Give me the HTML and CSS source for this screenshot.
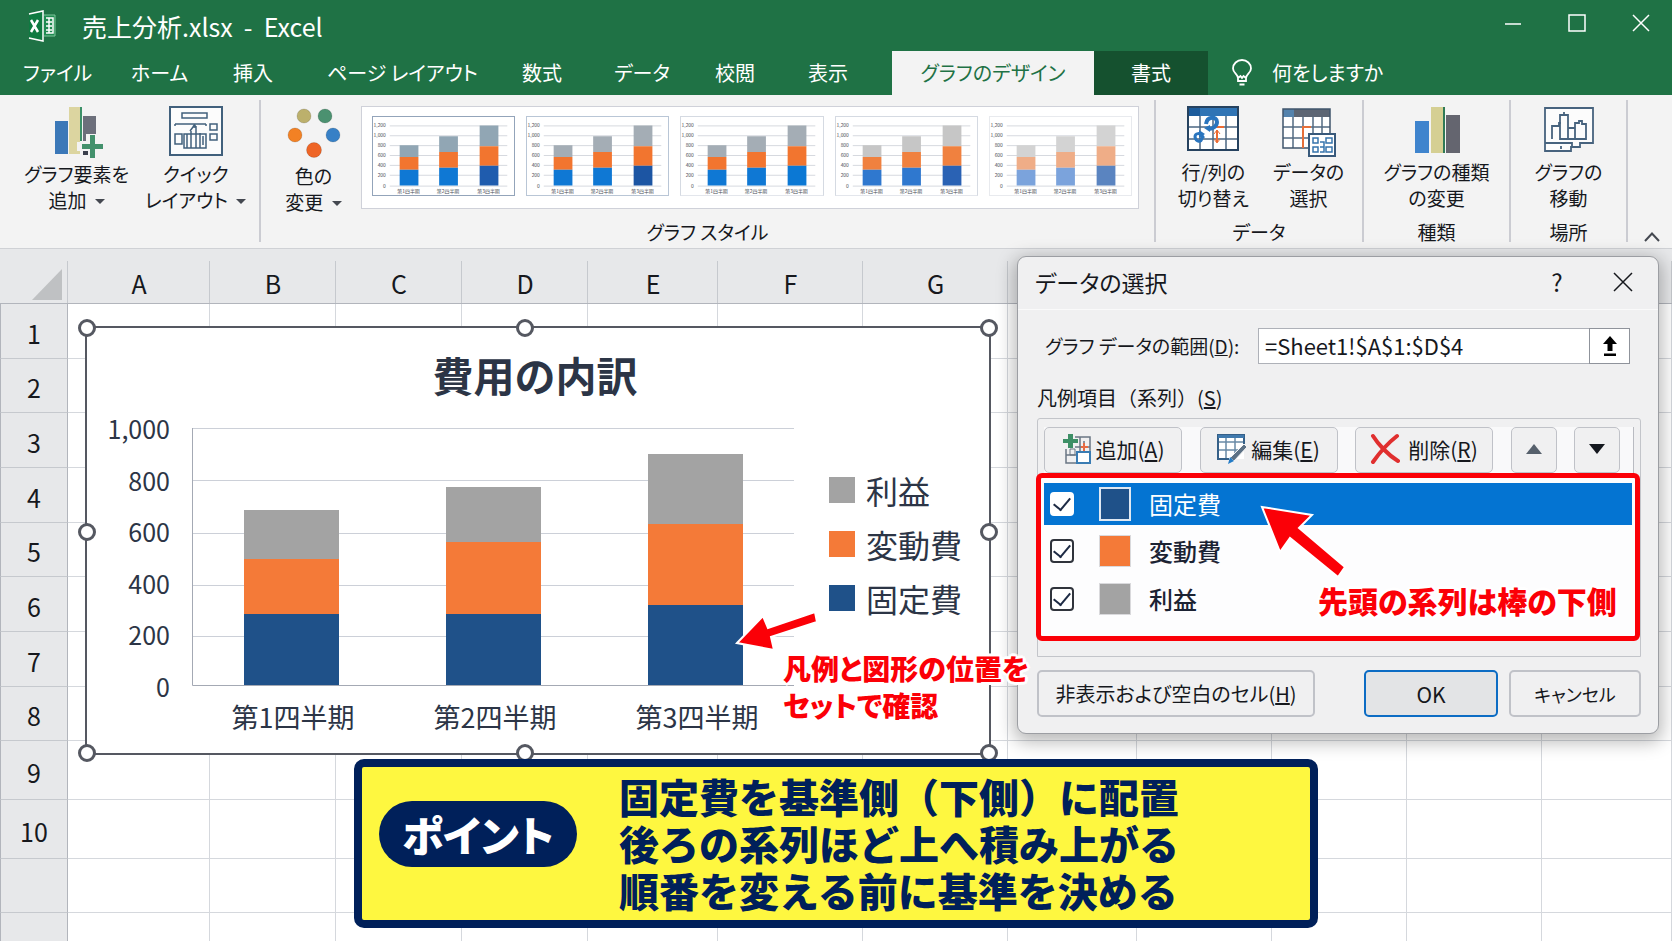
FILE: index.html
```html
<!DOCTYPE html>
<html lang="ja">
<head>
<meta charset="utf-8">
<meta name="viewport" content="width=device-width, initial-scale=1">
<title>売上分析.xlsx - Excel</title>
<link rel="stylesheet" href="styles.css">
</head>
<body>
<svg class="defs" width="0" height="0" aria-hidden="true">
  <symbol id="thumb" viewBox="0 0 143 78">
    <path class="t-grid" d="M17 8.500H136M17 18.500H136M17 28.500H136M17 38.500H136M17 48.500H136M17 58.500H136M17 69.500H136"/>
    <path class="t-top" d="M27 28h19v12H27zM67 19h19v16H67zM108 8h19v21h-19z"/>
    <path class="t-mid" d="M27 40h19v13H27zM67 35h19v16H67zM108 29h19v20h-19z"/>
    <path class="t-low" d="M27 53h19v16H27zM67 51h19v18H67z"/>
    <path class="t-end" d="M108 49h19v20h-19z"/>
    <g class="t-tick">
      <text x="13" y="10">1,200</text><text x="13" y="20">1,000</text><text x="13" y="30">800</text><text x="13" y="40">600</text><text x="13" y="50">400</text><text x="13" y="60">200</text><text x="13" y="71">0</text>
    </g>
    <g class="t-cat"><text x="36" y="76">第1四半期</text><text x="76" y="76">第2四半期</text><text x="117" y="76">第3四半期</text></g>
  </symbol>
</svg>

<div class="app">
  <header class="top">
    <div class="titlebar">
      <svg class="logo" viewBox="0 0 30 32" aria-hidden="true">
        <path d="M16 5h11v21H16" fill="#1f8a51" stroke="#7fc79c" stroke-width="1"/>
        <path d="M18 8h7v15h-7M18 12h6M18 16h6M18 20h6M21 8v15" fill="none" stroke="#fff" stroke-width="1.500"/>
        <path d="M1 4L15 1v30L1 28z" fill="#0f7a41"/>
        <path d="M1 4L15 1v30L1 28" fill="none" stroke="#fff" stroke-width="1.500"/>
        <path d="M3 10l7 12M10 10L3 22" stroke="#fff" stroke-width="2.500"/>
      </svg>
      <h1 class="doc-title">売上分析.xlsx&nbsp; -&nbsp; Excel</h1>
      <div class="win-controls">
        <button type="button" aria-label="最小化"><svg viewBox="0 0 20 20"><path d="M2 11H18"/></svg></button>
        <button type="button" aria-label="最大化"><svg viewBox="0 0 20 20"><path d="M2 2H18V18H2Z"/></svg></button>
        <button type="button" aria-label="閉じる"><svg viewBox="0 0 20 20"><path d="M2 2L18 18M18 2L2 18"/></svg></button>
      </div>
    </div>
    <nav class="tabs">
      <a href="#file">ファイル</a>
      <a href="#home">ホーム</a>
      <a href="#insert">挿入</a>
      <a href="#layout">ページ レイアウト</a>
      <a href="#formula">数式</a>
      <a href="#data">データ</a>
      <a href="#review">校閲</a>
      <a href="#view">表示</a>
      <a class="active" href="#design">グラフのデザイン</a>
      <a class="format" href="#format">書式</a>
      <a class="tell" href="#tell"><svg viewBox="0 0 20 27" aria-hidden="true"><path d="M6 19C6 15 1 14 1 9.500a9 8.500 0 0 1 18 0C19 14 14 15 14 19V22H6ZM6 19l2.500-2 1.500 2 1.500-2L14 19M7.500 25.500h5"/></svg>何をしますか</a>
    </nav>
  </header>

  <section class="ribbon" aria-label="リボン">
    <div class="group g-layout">
      <div class="tools">
        <button type="button" class="tool">
          <svg width="52" height="54" viewBox="0 0 52 54"><path fill="#3b78b8" d="M4 15h13v33H4z"/><path fill="#dcd5a0" d="M18 1h11v47H18z"/><path fill="#3c9068" d="M29 1h2v34h-2z"/><path fill="#6c6f7b" d="M32 10h13v25H32z"/><path d="M35 52V45h-9v-9h9v-8h12v8h5v9h-5v7z" fill="#f3f3f3"/><path fill="#43916c" d="M31 38h8v-9h5v9h9v5h-9v9h-5v-9h-8z"/><path fill="#3a3f4c" d="M32 45h5v4h-5z"/></svg>
          <span>グラフ要素を<br>追加 <i class="caret"></i></span>
        </button>
        <button type="button" class="tool">
          <svg width="54" height="54" viewBox="0 0 54 54" fill="none" stroke="#41607c" stroke-width="1.500"><path d="M1 1h52v48H1z" fill="#fcfcfc" stroke-width="2"/><path d="M13 7h25v5H13zM6 18h31M41 18h7v6h-7zM41 28h7v6h-7zM6 28h7v10H6zM15 28h22v14H15zM18 28v14M22 25v17M27 22v20M31 27v15M34 30v9M21 25l3-4h4M24 21c1-3 3-2 2 1M6 18v2M37 18v2"/></svg>
          <span>クイック<br>レイアウト <i class="caret"></i></span>
        </button>
      </div>
    </div>
    <div class="group g-style">
      <div class="tools">
        <button type="button" class="tool color">
          <svg width="54" height="54" viewBox="0 0 54 54"><g stroke="#00000022"><circle cx="17" cy="8" r="7" fill="#bcb06c"/><circle cx="38" cy="8" r="7" fill="#4b9170"/><circle cx="8" cy="27" r="7" fill="#f28124"/><circle cx="46" cy="27" r="7" fill="#3780c6"/><circle cx="27" cy="42" r="7.500" fill="#ee6526"/></g></svg>
          <span>色の<br>変更 <i class="caret"></i></span>
        </button>
        <div class="gallery">
          <button type="button" class="thumb s1" aria-label="スタイル 1"><svg><use href="#thumb"/></svg></button>
          <button type="button" class="thumb s2" aria-label="スタイル 2"><svg><use href="#thumb"/></svg></button>
          <button type="button" class="thumb s3" aria-label="スタイル 3"><svg><use href="#thumb"/></svg></button>
          <button type="button" class="thumb s4" aria-label="スタイル 4"><svg><use href="#thumb"/></svg></button>
          <button type="button" class="thumb s5" aria-label="スタイル 5"><svg><use href="#thumb"/></svg></button>
        </div>
      </div>
      <div class="group-name">グラフ スタイル</div>
    </div>
    <div class="group g-data">
      <div class="tools">
        <button type="button" class="tool">
          <svg width="54" height="52" viewBox="0 0 54 52" fill="none"><path d="M2 2h50v42H2z" fill="#fff"/><path d="M2 1h50v9H2z" fill="#2f74b5"/><path d="M2 1h12v9H2z" fill="#1c5c9c"/><path d="M14 10v34M27 10v34M40 10v34M2 21h50M2 33h50" stroke="#4b6782" stroke-width="1.500"/><path d="M2 1h50v43H2z" stroke="#26425f" stroke-width="2"/><path d="M31 24v12M29 21h9" stroke="#ed6b32" stroke-width="2"/><path d="M28 28l3-4 3 4M28 33l3 4 3-4" stroke="#ed6b32"/><path d="M20 18c1-8 11-8 11-2 0 4-4 7-8 7" stroke="#2a75be" stroke-width="4"/><path d="M24 19l-6 3 6 4z" fill="#2a75be"/><path d="M17 31c-3-5-8-4-8 0 1 5 6 6 7 1z" stroke="#2a75be" stroke-width="3"/><path d="M13 24l6 4-6 4z" fill="#2a75be"/></svg>
          <span>行/列の<br>切り替え</span>
        </button>
        <button type="button" class="tool">
          <svg width="54" height="52" viewBox="0 0 54 52" fill="none"><path d="M1 4h47v38H1z" fill="#fff"/><path d="M1 3h47v8H1z" fill="#5c6573"/><path d="M1 3h11v8H1z" fill="#5483ad"/><path d="M11 11v31M21 11v31M31 11v31M40 11v31M1 21h47M1 32h47" stroke="#536b82" stroke-width="1.500"/><path d="M1 3h47v39H1z" stroke="#40566c" stroke-width="1.500"/><path d="M21 42V21h8" stroke="#e56f3a" stroke-width="2"/><path d="M27 28h26v22H27z" fill="#fff" stroke="#38597b" stroke-width="2"/><path d="M31 32h5v5h-5zM31 41h5v5h-5zM44 32h6v5h-6zM44 41h6v5h-6zM38 36h4v10h-4M38 41h4" stroke="#3674ad" stroke-width="1.500"/></svg>
          <span>データの<br>選択</span>
        </button>
      </div>
      <div class="group-name">データ</div>
    </div>
    <div class="group g-type">
      <div class="tools">
        <button type="button" class="tool">
          <svg width="46" height="52" viewBox="0 0 46 52"><path fill="#3f84cd" d="M1 15h14v32H1z"/><path fill="#d5cf93" d="M17 1h12v46H17z"/><path fill="#2f7a57" d="M29 1h2v46h-2z"/><path fill="#64656f" d="M32 9h14v38H32z"/></svg>
          <span>グラフの種類<br>の変更</span>
        </button>
      </div>
      <div class="group-name">種類</div>
    </div>
    <div class="group g-place">
      <div class="tools">
        <button type="button" class="tool">
          <svg width="52" height="52" viewBox="0 0 52 52" fill="none" stroke="#47637e" stroke-width="1.800"><path d="M2 2h48v35H37v4h-9v4H2z" fill="#fcfcfc"/><path d="M2 37h27v4M28 41h9M9 33V20h7v-3h2M17 33V9h8v24zM21 9V6M25 22h7v11h-7M32 33V17h4v-2h3v3h4v15zM18 40v3"/></svg>
          <span>グラフの<br>移動</span>
        </button>
      </div>
      <div class="group-name">場所</div>
    </div>
    <button type="button" class="collapse" aria-label="リボンを折りたたむ"><svg viewBox="0 0 16 10"><path d="M1 9L8 1.500L15 9"/></svg></button>
  </section>

  <main class="workspace">
    <div class="sheet">
      <table class="cells">
        <colgroup><col class="c-row"><col class="c-a"><col class="c-b"><col class="c-b"><col class="c-b"><col class="c-e"><col class="c-f"><col class="c-f"><col class="c-h"><col class="c-i"><col class="c-i"><col class="c-i"><col></colgroup>
        <thead><tr><th class="corner"><span></span></th><th>A</th><th>B</th><th>C</th><th>D</th><th>E</th><th>F</th><th>G</th><th></th><th></th><th></th><th></th><th></th></tr></thead>
        <tbody>
          <tr><th>1</th><td></td><td></td><td></td><td></td><td></td><td></td><td></td><td></td><td></td><td></td><td></td><td></td></tr>
          <tr><th>2</th><td></td><td></td><td></td><td></td><td></td><td></td><td></td><td></td><td></td><td></td><td></td><td></td></tr>
          <tr><th>3</th><td></td><td></td><td></td><td></td><td></td><td></td><td></td><td></td><td></td><td></td><td></td><td></td></tr>
          <tr><th>4</th><td></td><td></td><td></td><td></td><td></td><td></td><td></td><td></td><td></td><td></td><td></td><td></td></tr>
          <tr><th>5</th><td></td><td></td><td></td><td></td><td></td><td></td><td></td><td></td><td></td><td></td><td></td><td></td></tr>
          <tr><th>6</th><td></td><td></td><td></td><td></td><td></td><td></td><td></td><td></td><td></td><td></td><td></td><td></td></tr>
          <tr><th>7</th><td></td><td></td><td></td><td></td><td></td><td></td><td></td><td></td><td></td><td></td><td></td><td></td></tr>
          <tr><th>8</th><td></td><td></td><td></td><td></td><td></td><td></td><td></td><td></td><td></td><td></td><td></td><td></td></tr>
          <tr class="tall"><th>9</th><td></td><td></td><td></td><td></td><td></td><td></td><td></td><td></td><td></td><td></td><td></td><td></td></tr>
          <tr class="tall"><th>10</th><td></td><td></td><td></td><td></td><td></td><td></td><td></td><td></td><td></td><td></td><td></td><td></td></tr>
          <tr class="tall"><th></th><td></td><td></td><td></td><td></td><td></td><td></td><td></td><td></td><td></td><td></td><td></td><td></td></tr>
          <tr class="tall"><th></th><td></td><td></td><td></td><td></td><td></td><td></td><td></td><td></td><td></td><td></td><td></td><td></td></tr>
        </tbody>
      </table>
    </div>

    <figure class="chart">
      <figcaption>費用の内訳</figcaption>
      <div class="chart-body">
        <div class="y-axis"><span>1,000</span><span>800</span><span>600</span><span>400</span><span>200</span><span>0</span></div>
        <div class="plot">
          <svg viewBox="0 0 602 258" preserveAspectRatio="none" role="img" aria-label="積み上げ縦棒グラフ">
            <path d="M0 .5H602M0 52.500H602M0 105.500H602M0 157.500H602M0 208.500H602" stroke="#ccd0d8"/>
            <path d="M.5 0V257.500H602" fill="none" stroke="#a4a9b4"/>
            <path fill="#a3a3a3" d="M52 82h95v49H52zM254 59h95v55h-95zM456 26h95v70h-95z"/>
            <path fill="#f47a38" d="M52 131h95v55H52zM254 114h95v72h-95zM456 96h95v81h-95z"/>
            <path fill="#1f5189" d="M52 186h95v71H52zM254 186h95v71h-95zM456 177h95v80h-95z"/>
          </svg>
          <div class="x-axis"><span>第1四半期</span><span>第2四半期</span><span>第3四半期</span></div>
        </div>
        <ul class="legend">
          <li><i class="sw grey"></i>利益</li>
          <li><i class="sw orange"></i>変動費</li>
          <li><i class="sw blue"></i>固定費</li>
        </ul>
      </div>
      <i class="handle tl"></i><i class="handle tc"></i><i class="handle tr"></i><i class="handle ml"></i><i class="handle mr"></i><i class="handle bl"></i><i class="handle bc"></i><i class="handle br"></i>
    </figure>

    <form class="dialog" role="dialog" aria-labelledby="dlg-title">
      <div class="dlg-head">
        <h2 id="dlg-title">データの選択</h2>
        <button type="button" class="help" aria-label="ヘルプ">?</button>
        <button type="button" class="close" aria-label="閉じる"><svg viewBox="0 0 20 20"><path d="M1 1L19 19M19 1L1 19"/></svg></button>
      </div>
      <div class="dlg-body">
        <div class="range">
          <label for="range">グラフ データの範囲(<u>D</u>):</label>
          <input id="range" type="text" value="=Sheet1!$A$1:$D$4">
          <button type="button" aria-label="範囲を選択"><svg viewBox="0 0 18 22"><path d="M9 1l7 8h-4.500v7h-5V9H2z"/><path d="M3 18.500h12V21H3z"/></svg></button>
        </div>
        <div class="series-name" id="series-name">凡例項目（系列）(<u>S</u>)</div>
        <div class="series" role="group" aria-labelledby="series-name">
          <div class="series-bar">
            <button type="button"><svg width="30" height="32" viewBox="0 0 30 32" fill="none"><path d="M13 4h15v22M18 4v20M13 14h15M4 16v14h10M4 22h10M22 8v11" stroke="#697684" stroke-width="1.500"/><path d="M19 14h7M22 10v8" stroke="#e66c45" stroke-width="2"/><path d="M15 19h13v11H15z" fill="#fff" stroke="#3a7cb3" stroke-width="2"/><path d="M8 16h5v6H8z" stroke="#697684"/><path d="M6 1h5v5h5v4h-5v5H6v-5H1V6h5z" fill="#3d8f66"/></svg><span>追加(<u>A</u>)</span></button>
            <button type="button"><svg width="30" height="32" viewBox="0 0 30 32" fill="none"><path d="M1 2h26v24H1z" fill="#fff"/><path d="M1 9h26M1 17h26M9 2v24M18 2v24" stroke="#6a8aa6" stroke-width="1.500"/><path d="M27 12V2H1v24h11" stroke="#356088" stroke-width="2"/><path d="M1 2h26v3H1z" fill="#4079ad"/><path d="M27 11l3 3-13 14-4-3z" fill="#5d7185" stroke="#f3f3f3"/><path d="M13 24l4 4-6 3z" fill="#237bc6"/></svg><span>編集(<u>E</u>)</span></button>
            <button type="button" class="delete"><svg width="30" height="32" viewBox="0 0 30 32"><path d="M3 3C8 11 18 22 28 28M27 3C18 10 10 19 3 29" fill="none" stroke="#e02f2f" stroke-width="4" stroke-linecap="round"/></svg><span>削除(<u>R</u>)</span></button>
            <button type="button" class="move" aria-label="上へ"><svg viewBox="0 0 16 10"><path d="M0 10L8 0L16 10Z" fill="#56606c"/></svg></button>
            <button type="button" class="move" aria-label="下へ"><svg viewBox="0 0 16 10"><path d="M0 0H16L8 10Z" fill="#14181f"/></svg></button>
          </div>
          <div class="series-list">
            <label class="item selected"><input type="checkbox" checked><i class="sw blue"></i>固定費</label>
            <label class="item"><input type="checkbox" checked><i class="sw orange"></i>変動費</label>
            <label class="item"><input type="checkbox" checked><i class="sw grey"></i>利益</label>
          </div>
        </div>
        <div class="dlg-foot">
          <button type="button" class="hidden-cells">非表示および空白のセル(<u>H</u>)</button>
          <button type="submit" class="ok">OK</button>
          <button type="button">キャンセル</button>
        </div>
      </div>
      <svg class="arrow-list" viewBox="0 0 90 76" aria-hidden="true"><path d="M3 3L53 11L40 24L86 63L79 73L31 34L21 48Z"/></svg>
      <p class="note note-list">先頭の系列は棒の下側</p>
    </form>

    <svg class="arrow-bar" viewBox="0 0 86 40" aria-hidden="true"><path d="M3 30L29 3L34 15L81 -1L83 9L37 24L40 37Z"/></svg>
    <p class="note note-bar">凡例と図形の位置を<br>セットで確認</p>

    <aside class="point">
      <strong>ポイント</strong>
      <p>固定費を基準側（下側）に配置<br>後ろの系列ほど上へ積み上がる<br>順番を変える前に基準を決める</p>
    </aside>
  </main>
</div>
</body>
</html>
```
FILE: styles.css
```css
* { box-sizing: border-box; }
html, body { margin: 0; height: 100%; }
body {
  font-family: "Noto Sans CJK JP", "Noto Sans", sans-serif;
  font-size: 19px;
  color: #16181d;
  background: #fff;
}
button, input {
  font: inherit;
  color: inherit;
  font-feature-settings: inherit;
}
button { margin: 0; padding: 0; border: 0; background: none; }
p, h1, h2, ul, figure { margin: 0; padding: 0; }
.defs { display: none; }

.app {
  display: flex;
  flex-direction: column;
  height: 100vh;
  overflow: hidden;
  font-feature-settings: "palt";
}

/* title bar and tabs */
.top { background: #1f7245; color: #fff; }
.titlebar {
  display: flex;
  align-items: center;
  height: 51px;
  padding: 0 21px 0 28px;
}
.logo { width: 30px; height: 32px; margin-right: 24px; }
.doc-title { font-size: 25px; font-weight: 400; line-height: 32px; }
.win-controls { display: flex; gap: 44px; margin: 0 0 6px auto; }
.win-controls button { width: 20px; height: 20px; }
.win-controls svg, .close svg {
  display: block;
  width: 20px;
  height: 20px;
  fill: none;
  stroke: currentColor;
  stroke-width: 1.5;
}
.tabs {
  display: grid;
  grid-template-columns: 108px 102px 94px 195px 92px 101px 93px 84px 202px 114px auto;
  height: 44px;
  padding-left: 23px;
  font-size: 20px;
}
.tabs a {
  display: flex;
  align-items: center;
  padding-bottom: 2px;
  color: inherit;
  text-decoration: none;
  white-space: nowrap;
}
.tabs .active { justify-content: center; background: #f3f3f3; color: #1f7245; }
.tabs .format { justify-content: center; background: #15512f; }
.tabs .tell { margin-left: 24px; gap: 20px; }
.tell svg { width: 20px; height: 27px; fill: none; stroke: #fff; stroke-width: 1.8; }

/* ribbon */
.ribbon {
  display: flex;
  flex: none;
  height: 154px;
  padding: 5px 0 6px;
  background: #f3f3f3;
  border-bottom: 1px solid #cfd1d5;
}
.group {
  display: flex;
  flex-direction: column;
  justify-content: space-between;
  border-right: 2px solid #cbccd2;
}
.tools { display: flex; justify-content: center; }
.tool {
  display: flex;
  flex-direction: column;
  align-items: center;
  padding-top: 6px;
  line-height: 26px;
  white-space: nowrap;
}
.tool svg { margin-bottom: 1px; }
.caret {
  display: inline-block;
  margin-left: 4px;
  vertical-align: 4px;
  border: 5px solid transparent;
  border-top-color: #444850;
  border-bottom: 0;
}
.group-name { line-height: 20px; text-align: center; }
.g-layout { width: 261px; }
.g-layout .tools { justify-content: flex-start; gap: 16px; padding-left: 24px; }
.g-style { flex: 1; }
.g-style .tools { justify-content: flex-start; }
.color { width: 100px; padding: 8px 0 0 5px; }
.g-data { width: 208px; }
.g-data .tools { gap: 24px; padding-left: 4px; }
.g-type { width: 147px; }
.g-place { width: 117px; }
.collapse { width: 44px; align-self: flex-end; padding: 0 0 0 16px; }
.collapse svg { display: block; width: 16px; height: 10px; fill: none; stroke: #444850; stroke-width: 2; }
.gallery {
  display: flex;
  flex: 1;
  gap: 11px;
  height: 103px;
  margin: 6px 15px 0 0;
  padding: 9px 6px 12px 10px;
  background: #fff;
  border: 1px solid #cfd1d9;
}
.thumb {
  flex: 1;
  border: 1px solid #d5dae2;
  border-bottom-color: #e3e6ec;
  --top: #a4adb5; --mid: #f2752f; --low: #0f78d4; --end: #0b78d4;
}
.thumb svg { display: block; width: 100%; height: 78px; }
.s1 { --top: #91a6b4; --end: #1f5cae; border-color: #93a4ba; }
.s2 { --end: #1c55a3; border-color: #b9c6d6; }
.s4 { --top: #c6c6c6; --mid: #f0813f; --low: #2f78cf; --end: #2a62b4; }
.s5 { --top: #d3d3d3; --mid: #efad87; --low: #7ba3dc; --end: #5a84c0; border-color: #e8eaee; }
.t-grid { stroke: #d5d8de; fill: none; }
.t-top { fill: var(--top); }
.t-mid { fill: var(--mid); }
.t-low { fill: var(--low); }
.t-end { fill: var(--end); }
.t-tick, .t-cat { font-size: 5px; fill: #4a4e57; }
.t-tick { text-anchor: end; }
.t-cat { text-anchor: middle; }

/* worksheet */
.workspace { position: relative; flex: 1; min-height: 0; }
.sheet { height: 100%; overflow: hidden; }
.cells {
  width: 100%;
  border-collapse: separate;
  border-spacing: 0;
  table-layout: fixed;
}
.c-row { width: 68px; }
.c-a { width: 142px; }
.c-b { width: 126px; }
.c-e { width: 130px; }
.c-f { width: 145px; }
.c-h { width: 129px; }
.c-i { width: 135px; }
.cells tr { height: 55px; }
.cells tbody tr:nth-child(3n+2) { height: 54px; }
.cells tbody .tall { height: 59px; }
.cells th, .cells td { padding: 0; border: 1px solid #d5d8dd; border-width: 0 1px 1px 0; }
.cells th {
  padding-top: 3px;
  font-size: 25px;
  font-weight: 400;
  line-height: 30px;
  background: #e7e8ea;
  border-color: #c6c9ce;
}
.cells thead th {
  padding-top: 14px;
  border-right: 0;
  background: linear-gradient(#c6c9ce, #c6c9ce) right bottom / 1px 42px no-repeat #e7e8ea;
  border-bottom-color: #b2b5bc;
}
.cells tbody th { border-right-color: #b2b5bc; border-left: 1px solid #b2b5bc; }
.cells .corner { padding: 17px 6px 0 0; }
.corner span {
  display: block;
  width: 30px;
  height: 31px;
  margin-left: auto;
  background: #bfc1c3;
  clip-path: polygon(100% 0, 100% 100%, 0 100%);
}

/* chart object */
.chart {
  position: absolute;
  left: 85px;
  top: 77px;
  width: 906px;
  padding: 16px 26px 17px 12px;
  background: #fff;
  border: 2px solid #555861;
  color: #2c3546;
}
.chart figcaption {
  font-size: 41px;
  font-weight: 700;
  line-height: 60px;
  text-align: center;
  padding-left: 8px;
  font-feature-settings: normal;
}
.chart-body { display: flex; padding-top: 24px; font-size: 25px; }
.y-axis {
  display: flex;
  flex-direction: column;
  justify-content: space-between;
  flex: none;
  width: 71px;
  height: 288px;
  margin: -15px 22px 0 0;
  line-height: 30px;
  text-align: right;
}
.plot { flex: none; width: 602px; }
.plot svg { display: block; width: 100%; height: 258px; }
.x-axis {
  display: grid;
  grid-template-columns: 1fr 1fr 1fr;
  padding: 12px 0 0;
  width: 606px;
  font-size: 27px;
  line-height: 38px;
  text-align: center;
}
.legend { display: grid; gap: 4px; align-content: start; margin: 37px 0 0 35px; list-style: none; }
.legend li { display: flex; align-items: center; gap: 11px; font-size: 32px; line-height: 50px; white-space: nowrap; }
.sw { display: block; flex: none; width: 26px; height: 26px; }
.grey { background: #a3a3a3; }
.orange { background: #f47a38; }
.blue { background: #1f5189; }
.handle {
  position: absolute;
  width: 18px;
  height: 18px;
  background: #fff;
  border: 3px solid #555861;
  border-radius: 50%;
  transform: translate(-50%, -50%);
}
.tl, .ml, .bl { left: 0; }
.tc, .bc { left: 438px; }
.tr, .mr, .br { left: 100%; }
.tl, .tc, .tr { top: 0; }
.ml, .mr { top: 48%; }
.bl, .bc, .br { top: 100%; }

/* dialog */
.dialog {
  position: absolute;
  top: 7px;
  right: 13px;
  width: 642px;
  background: #f0f0f1;
  border: 1px solid #9c9ea3;
  border-radius: 9px;
  box-shadow: 0 5px 18px 3px #00000048;
}
.dlg-head {
  display: flex;
  align-items: center;
  height: 53px;
  padding: 0 25px 3px 17px;
  border-bottom: 1px solid #fafafa;
}
.dlg-head h2 { flex: 1; font-size: 23px; font-weight: 400; }
.help { width: 20px; margin-right: 46px; font-size: 24px; }
.dlg-body { padding: 18px 17px 16px 19px; }
.range { display: flex; height: 36px; padding: 0 11px 0 8px; }
.range label { flex: 1; line-height: 36px; white-space: nowrap; }
.range input {
  width: 332px;
  padding: 0 6px 2px;
  font-size: 22px;
  background: #fff;
  border: 1px solid #aeb1b8;
  outline: 0;
}
.range button {
  display: grid;
  place-items: center;
  width: 41px;
  margin-left: -1px;
  background: #fff;
  border: 1px solid #8f939b;
}
.range button svg { width: 18px; height: 22px; }
.series-name { margin: 18px 0 4px; font-size: 20px; line-height: 32px; font-feature-settings: normal; }
.series {
  height: 239px;
  padding: 8px 6px 0;
  border: 1px solid #c3c5ca;
  border-radius: 3px 3px 0 0;
}
.series-bar {
  display: flex;
  height: 46px;
  padding-right: 13px;
  justify-content: space-between;
  background: #f9f9fa;
  border-right: 1px solid #b9bbc1;
}
.series-bar button, .dlg-foot button {
  background: #f0f0f1;
  border: 1px solid #c0c2c8;
  border-radius: 5px;
}
.series-bar button {
  display: flex;
  align-items: center;
  justify-content: center;
  gap: 4px;
  width: 138px;
  padding-bottom: 3px;
  font-size: 21px;
}
.series-bar .delete { gap: 8px; }
.series-bar .move { width: 46px; }
.move svg { width: 16px; height: 10px; }
.series-list {
  margin: 0 -6px 0 -8px;
  padding: 5px 3px 13px;
  background: #fdfdfe;
  border: 5px solid #fb0007;
  border-radius: 6px;
}
.item {
  display: flex;
  align-items: center;
  height: 48px;
  padding-left: 6px;
  font-size: 24px;
  font-weight: 500;
  line-height: 30px;
  font-feature-settings: normal;
  color: #1c2333;
}
.item.selected { height: 42px; margin-bottom: 2px; background: #0474d2; color: #fff; font-weight: 400; }
.item input {
  appearance: none;
  width: 24px;
  height: 24px;
  margin: 0 25px 0 0;
  background: #fff;
  border: 2px solid #30343c;
  border-radius: 4px;
  display: grid;
  place-items: center;
}
.item.selected input { border-color: #fff; }
.item input:checked::before {
  content: "";
  width: 8px;
  height: 14px;
  border: solid #1d2a44;
  border-width: 0 2px 2px 0;
  transform: translateY(-2px) rotate(40deg);
}
.item .sw { width: 32px; height: 32px; margin-right: 18px; border: 1px solid #d9d9dc; }
.item.selected .sw { height: 34px; border: 2px solid #dfe8f2; }
.dlg-foot { display: flex; gap: 11px; margin-top: 13px; }
.dlg-foot button { flex: none; width: 132px; height: 47px; font-size: 18px; border-width: 2px; }
.dlg-foot .hidden-cells { width: 278px; margin-right: auto; font-size: 20px; }
.dlg-foot .ok { background: #e3e4e6; border-color: #0c6cc4; width: 134px; font-size: 21px; }

/* annotations */
.note {
  position: absolute;
  margin: 0;
  font-size: 28px;
  font-weight: 900;
  line-height: 37px;
  color: #fb0007;
  white-space: nowrap;
  text-shadow: 3px 0 #fff, -3px 0 #fff, 0 3px #fff, 0 -3px #fff, 2px 2px #fff, -2px 2px #fff, 2px -2px #fff, -2px -2px #fff;
}
.note-list { left: 300px; top: 325px; font-size: 30px; }
.note-bar { left: 783px; top: 401px; }
.arrow-list, .arrow-bar { position: absolute; overflow: visible; fill: #fb0007; stroke: #fff; stroke-width: 2; }
.arrow-list { left: 241px; top: 247px; width: 90px; height: 76px; }
.arrow-bar { left: 734px; top: 364px; width: 86px; height: 40px; }
.point {
  position: absolute;
  left: 354px;
  top: 510px;
  display: flex;
  align-items: center;
  width: 964px;
  padding: 6px 17px;
  background: #fef740;
  border: 8px solid #00205a;
  border-radius: 10px;
  color: #00205a;
}
.point strong {
  width: 198px;
  margin: 0 42px 20px 0;
  background: #00205a;
  border-radius: 33px;
  color: #fff;
  font-size: 42px;
  font-weight: 900;
  line-height: 66px;
  text-align: center;
}
.point p { font-size: 40px; font-weight: 900; line-height: 47px; font-feature-settings: normal; white-space: nowrap; }
```
